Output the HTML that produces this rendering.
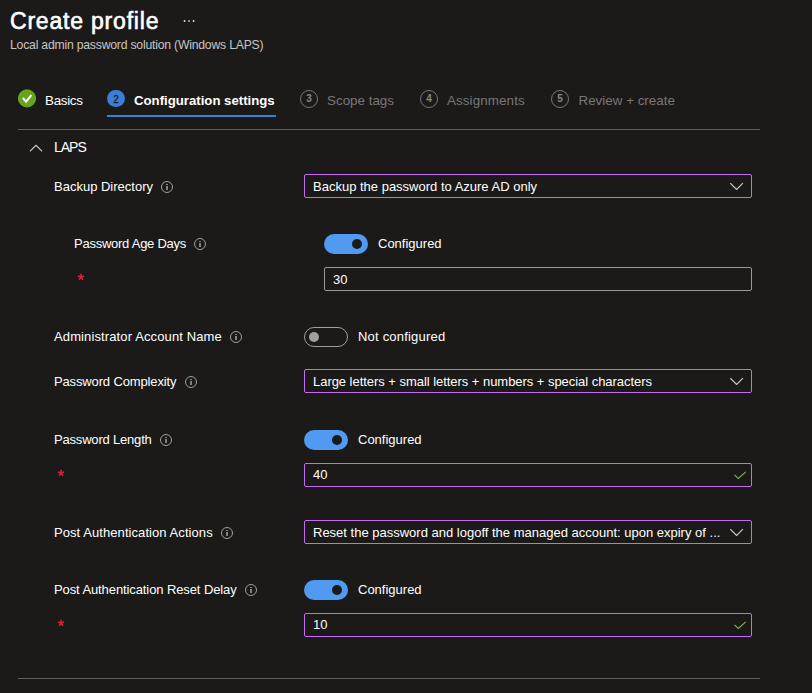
<!DOCTYPE html>
<html><head><meta charset="utf-8">
<style>
html,body{margin:0;padding:0;}
body{width:812px;height:693px;background:#1b1a19;position:relative;overflow:hidden;font-family:"Liberation Sans",sans-serif;color:#fff;}
.t{position:absolute;white-space:nowrap;line-height:1;}
.lbl{font-size:13px;color:#fff;}
.info{position:absolute;width:10px;height:10px;border:1px solid #a19f9d;border-radius:50%;}
.info:before{content:"";position:absolute;left:4px;top:4px;width:2px;height:4px;background:#858381;}
.info:after{content:"";position:absolute;left:4px;top:2px;width:2px;height:1px;background:#858381;}
.box{position:absolute;box-sizing:border-box;height:24px;border:1px solid #c56af5;border-radius:2px;}
.box.gray{border-color:#9a9896;}
.box .v{position:absolute;left:8px;top:5px;font-size:13px;line-height:1;white-space:nowrap;}
.chev{position:absolute;right:7px;top:7px;}
.tog{position:absolute;box-sizing:border-box;width:44px;height:20px;border-radius:10px;background:#519af1;}
.tog:after{content:"";position:absolute;right:6px;top:5px;width:10px;height:10px;border-radius:50%;background:#1b1a19;}
.tog.off{background:transparent;border:1px solid #a19f9d;}
.tog.off:after{left:4px;right:auto;top:4px;background:#a19f9d;}
.star{position:absolute;width:8px;height:8px;}.star svg{display:block}
.step{position:absolute;box-sizing:border-box;width:18px;height:18px;border-radius:50%;border:1px solid #797775;color:#8a8886;font-size:10px;font-weight:700;text-align:center;line-height:16.8px;}
.sep{position:absolute;height:1px;background:#605e5c;}
</style></head><body>

<div class="t" style="left:10px;top:10px;font-size:23px;font-weight:400;-webkit-text-stroke:0.6px #fff;letter-spacing:0.8px;">Create profile</div>
<svg style="position:absolute;left:180px;top:16px" width="18" height="10" viewBox="0 0 18 10"><g fill="#d2d0ce"><rect x="3.8" y="4" width="1.5" height="2"/><rect x="8.2" y="4" width="1.6" height="2" fill="#a8a6a4"/><rect x="12.8" y="4" width="1.5" height="2"/></g></svg>
<div class="t" style="left:10px;top:38.7px;font-size:12.2px;letter-spacing:-0.2px;color:#c8c6c4;">Local admin password solution (Windows LAPS)</div>

<!-- tabs -->
<svg style="position:absolute;left:18px;top:89px" width="18" height="19" viewBox="0 0 18 19"><circle cx="9" cy="9.4" r="9.1" fill="#66a31e"/><path d="M4.9 9 L8.1 12.7 L13.4 6.1" fill="none" stroke="#fff" stroke-width="2" stroke-linecap="butt" stroke-linejoin="miter"/></svg>
<div class="t" style="left:45px;top:93.5px;font-size:13.4px;letter-spacing:-0.3px;">Basics</div>
<div class="step" style="left:107.4px;top:90px;width:17.2px;height:17px;background:#3b7fd9;border:none;color:#1b1a19;font-weight:400;-webkit-text-stroke:0.3px #1b1a19;line-height:19.2px;">2</div>
<div class="t" style="left:134px;top:94px;font-size:13.2px;font-weight:700;">Configuration settings</div>
<div style="position:absolute;left:107px;top:115px;width:169px;height:2px;background:#3b7fd9;"></div>
<div class="step" style="left:300px;top:90px;">3</div>
<div class="t" style="left:327px;top:93.5px;font-size:13.4px;color:#797775;">Scope tags</div>
<div class="step" style="left:420px;top:90px;">4</div>
<div class="t" style="left:447px;top:93.5px;font-size:13.4px;letter-spacing:0.1px;color:#797775;">Assignments</div>
<div class="step" style="left:551px;top:90px;">5</div>
<div class="t" style="left:578.5px;top:93.5px;font-size:13.4px;color:#797775;">Review + create</div>

<div class="sep" style="left:18px;top:129px;width:742px;"></div>

<!-- LAPS -->
<svg style="position:absolute;left:29px;top:144px" width="14" height="8" viewBox="0 0 14 8"><path d="M1.3 6.9 L7 1.4 L12.7 6.9" fill="none" stroke="#d0cecc" stroke-width="1.2" stroke-linecap="round"/></svg>
<div class="t" style="left:54px;top:140px;font-size:14px;letter-spacing:-1px;">LAPS</div>

<div class="t lbl" style="left:54px;top:180px;">Backup Directory</div>
<div class="info" style="left:161px;top:181px;"></div>
<div class="box" style="left:304px;top:174px;width:448px;"><div class="v">Backup the password to Azure AD only</div>
<svg class="chev" width="14" height="8" viewBox="0 0 14 8"><path d="M0.3 1.2 L6.6 7.5 L12.9 1.2" fill="none" stroke="#d0cecc" stroke-width="1.1"/></svg></div>

<div class="t lbl" style="left:74px;top:237px;letter-spacing:-0.25px;">Password Age Days</div>
<div class="info" style="left:194px;top:238px;"></div>
<div class="tog" style="left:324px;top:234px;"></div>
<div class="t lbl" style="left:378px;top:237px;">Configured</div>
<div class="star" style="left:77px;top:273px;"><svg width="8" height="8" viewBox="-4 -4 8 8"><g stroke="#dc2039" stroke-width="1.6" stroke-linecap="butt"><line x1="0" y1="0" x2="0" y2="-3.3"/><line x1="0" y1="0" x2="3.1" y2="-1"/><line x1="0" y1="0" x2="-3.1" y2="-1"/><line x1="0" y1="0" x2="1.9" y2="2.7"/><line x1="0" y1="0" x2="-1.9" y2="2.7"/></g></svg></div>
<div class="box gray" style="left:324px;top:267px;width:428px;"><div class="v">30</div></div>

<div class="t lbl" style="left:54px;top:330px;letter-spacing:0.12px;">Administrator Account Name</div>
<div class="info" style="left:230px;top:331px;"></div>
<div class="tog off" style="left:304px;top:327px;"></div>
<div class="t lbl" style="left:358px;top:330px;letter-spacing:0.2px;">Not configured</div>

<div class="t lbl" style="left:54px;top:375px;letter-spacing:-0.14px;">Password Complexity</div>
<div class="info" style="left:185px;top:376px;"></div>
<div class="box" style="left:304px;top:369px;width:448px;"><div class="v" style="letter-spacing:-0.04px">Large letters + small letters + numbers + special characters</div>
<svg class="chev" width="14" height="8" viewBox="0 0 14 8"><path d="M0.3 1.2 L6.6 7.5 L12.9 1.2" fill="none" stroke="#d0cecc" stroke-width="1.1"/></svg></div>

<div class="t lbl" style="left:54px;top:433px;letter-spacing:-0.19px;">Password Length</div>
<div class="info" style="left:160px;top:434px;"></div>
<div class="tog" style="left:304px;top:430px;"></div>
<div class="t lbl" style="left:358px;top:433px;">Configured</div>
<div class="star" style="left:57px;top:469px;"><svg width="8" height="8" viewBox="-4 -4 8 8"><g stroke="#dc2039" stroke-width="1.6" stroke-linecap="butt"><line x1="0" y1="0" x2="0" y2="-3.3"/><line x1="0" y1="0" x2="3.1" y2="-1"/><line x1="0" y1="0" x2="-3.1" y2="-1"/><line x1="0" y1="0" x2="1.9" y2="2.7"/><line x1="0" y1="0" x2="-1.9" y2="2.7"/></g></svg></div>
<div class="box" style="left:304px;top:463px;width:448px;"><div class="v" style="top:4px">40</div>
<svg width="14" height="10" viewBox="0 0 14 10" style="position:absolute;left:428px;top:7px"><path d="M1.5 3.8 L5.3 7.4 L12.8 0.8" fill="none" stroke="#7fb24a" stroke-width="1.1"/></svg></div>

<div class="t lbl" style="left:54px;top:526px;letter-spacing:0.07px;">Post Authentication Actions</div>
<div class="info" style="left:221px;top:527px;"></div>
<div class="box" style="left:304px;top:520px;width:448px;"><div class="v">Reset the password and logoff the managed account: upon expiry of ...</div>
<svg class="chev" width="14" height="8" viewBox="0 0 14 8"><path d="M0.3 1.2 L6.6 7.5 L12.9 1.2" fill="none" stroke="#d0cecc" stroke-width="1.1"/></svg></div>

<div class="t lbl" style="left:54px;top:583px;letter-spacing:-0.1px;">Post Authentication Reset Delay</div>
<div class="info" style="left:245px;top:584px;"></div>
<div class="tog" style="left:304px;top:580px;"></div>
<div class="t lbl" style="left:358px;top:583px;">Configured</div>
<div class="star" style="left:57px;top:619px;"><svg width="8" height="8" viewBox="-4 -4 8 8"><g stroke="#dc2039" stroke-width="1.6" stroke-linecap="butt"><line x1="0" y1="0" x2="0" y2="-3.3"/><line x1="0" y1="0" x2="3.1" y2="-1"/><line x1="0" y1="0" x2="-3.1" y2="-1"/><line x1="0" y1="0" x2="1.9" y2="2.7"/><line x1="0" y1="0" x2="-1.9" y2="2.7"/></g></svg></div>
<div class="box" style="left:304px;top:613px;width:448px;"><div class="v" style="top:4px">10</div>
<svg width="14" height="10" viewBox="0 0 14 10" style="position:absolute;left:428px;top:7px"><path d="M1.5 3.8 L5.3 7.4 L12.8 0.8" fill="none" stroke="#7fb24a" stroke-width="1.1"/></svg></div>

<div class="sep" style="left:18px;top:678px;width:742px;"></div>

</body></html>
